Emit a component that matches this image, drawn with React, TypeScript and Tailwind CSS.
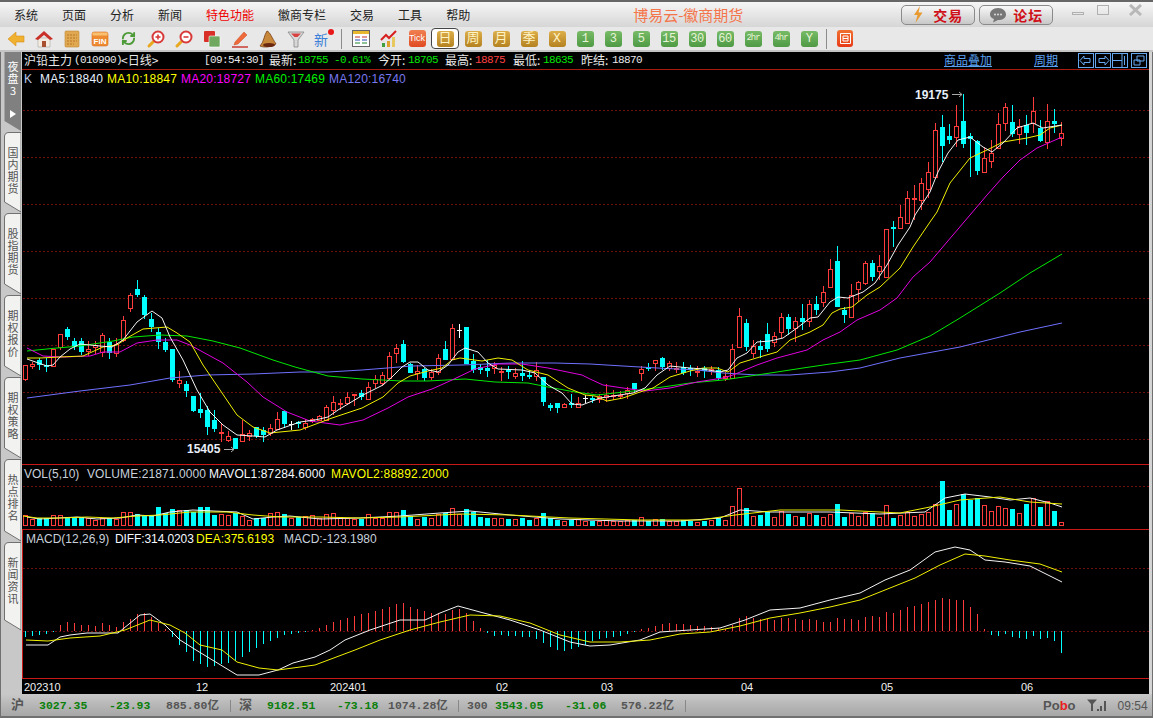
import React from "react";
import { RefreshCw } from "lucide-react";

type Candle = [string, number, number, number, number];

// [colour, high, body top, body bottom, low], in page pixels, one bar every 7px from x=25
const CANDLES: Candle[] = [
  ["r",365,365,379,381],["r",362,364,366,369],["c",358,360,365,370],["c",358,365,367,372],["r",349,349,366,366],
  ["r",334,334,347,350],["c",327,329,337,340],["c",338,341,347,350],["c",338,341,352,355],["r",341,349,351,356],
  ["r",341,345,347,354],["r",333,335,352,357],["c",338,342,353,359],["r",338,344,353,357],["r",316,320,340,342],
  ["r",293,295,308,312],["c",280,289,295,297],["c",295,297,315,319],["c",313,319,327,332],["c",328,332,342,349],
  ["c",338,342,350,352],["c",349,349,380,382],["r",371,380,383,388],["c",381,384,391,397],["c",396,396,411,412],
  ["c",393,409,413,418],["c",406,410,427,435],["c",410,420,429,432],["r",423,432,433,442],["r",431,436,440,442],
  ["c",438,438,449,449],["r",420,434,441,442],["r",430,433,436,441],["c",427,427,436,438],["c",427,430,435,442],
  ["r",424,428,433,436],["r",412,419,429,430],["c",411,411,424,428],["w",421,424,424,430],["c",421,422,424,428],
  ["r",419,423,427,430],["r",418,419,421,423],["r",415,416,420,420],["r",405,407,420,420],["r",396,402,410,415],
  ["r",399,403,404,410],["r",392,397,403,405],["r",394,394,395,406],["c",390,393,397,400],["r",382,387,399,400],
  ["r",375,379,383,388],["r",372,375,383,386],["r",352,356,378,379],["r",344,348,353,363],["c",340,344,362,363],
  ["c",363,364,373,373],["r",365,371,373,380],["c",368,369,378,381],["r",369,372,377,380],["r",354,358,372,375],
  ["c",341,349,360,360],["r",324,328,359,359],["w",324,330,330,338],["c",327,327,364,364],["c",354,361,370,373],
  ["c",364,367,370,374],["c",360,368,371,377],["r",362,365,368,374],["r",367,371,372,381],["c",366,370,371,379],
  ["r",368,373,376,379],["c",361,373,376,381],["c",370,375,376,379],["r",362,370,376,381],["c",377,377,402,406],
  ["c",403,405,408,411],["c",403,403,408,413],["r",403,404,407,408],["c",394,403,405,408],["r",397,403,407,408],
  ["w",395,398,398,403],["c",396,398,400,403],["r",394,396,399,403],["r",384,395,397,402],["r",390,395,396,400],
  ["r",391,395,396,399],["r",387,390,393,399],["c",383,383,389,392],["r",366,369,373,381],["c",363,367,368,371],
  ["r",360,360,363,371],["c",357,358,367,370],["r",361,363,368,371],["r",362,368,369,373],["c",362,367,373,375],
  ["c",365,368,370,376],["r",366,371,372,377],["c",366,368,371,378],["r",366,369,371,375],["c",367,370,378,380],
  ["r",372,376,378,381],["r",344,349,378,379],["r",308,316,347,347],["c",319,323,347,351],["r",340,346,353,358],
  ["c",340,346,350,358],["c",323,334,349,352],["r",332,336,342,347],["r",313,317,332,338],["c",314,317,329,335],
  ["r",317,321,328,342],["c",304,318,322,330],["r",300,304,321,327],["c",296,304,310,315],["r",286,292,302,307],
  ["r",259,269,287,288],["c",246,261,307,307],["c",307,310,315,323],["r",284,295,317,317],["r",281,282,289,302],
  ["r",261,263,283,285],["c",260,263,277,281],["r",255,266,271,280],["r",229,229,277,278],["c",221,227,229,247],
  ["r",205,217,228,228],["r",191,198,223,224],["r",185,198,199,220],["r",178,183,200,210],["r",162,172,189,198],
  ["r",123,130,177,177],["c",115,127,146,162],["c",124,136,140,144],["r",105,126,137,147],["c",94,121,144,148],
  ["c",133,136,139,177],["c",140,141,171,175],["r",147,158,172,172],["r",140,153,161,168],["r",113,124,148,148],
  ["r",103,107,123,131],["c",105,122,134,137],["r",119,126,134,144],["c",115,125,133,145],["r",97,111,123,133],
  ["c",120,128,141,142],["r",104,121,142,149],["c",109,121,124,133],["r",122,133,138,146],
];

const VOL = [
  11,7,8,8,11,11,9,9,9,8,
  6,8,8,7,14,14,12,10,11,19,
  13,17,16,16,14,19,19,11,12,11,
  13,10,6,8,8,13,14,12,8,9,
  10,11,8,12,13,9,8,7,7,12,
  8,8,14,14,16,10,7,9,8,12,
  13,18,12,17,14,9,8,8,8,7,
  7,8,6,8,13,8,6,5,6,7,
  5,5,5,6,5,5,6,6,9,5,
  7,7,5,5,6,5,4,5,6,8,
  6,20,38,18,10,11,14,9,15,12,
  10,9,13,11,9,12,22,9,13,10,
  14,13,9,21,8,11,14,10,12,14,
  22,45,16,22,32,26,28,21,15,20,
  18,17,13,22,28,19,25,15,4,
];

const MACD = [
  -6,-5,-4,-3,-1,6,9,8,6,6,
  5,8,6,4,9,12,17,18,14,8,
  2,-6,-14,-21,-30,-33,-36,-35,-33,-32,
  -30,-26,-21,-17,-13,-10,-7,-4,-3,-2,
  -1,1,3,6,9,11,13,15,17,18,
  20,22,24,27,28,24,22,20,18,18,
  17,21,22,18,10,3,-2,-5,-4,-5,
  -5,-6,-6,-8,-12,-16,-19,-20,-18,-16,
  -14,-10,-8,-7,-6,-5,-3,-1,2,3,
  5,7,8,7,7,6,5,5,4,3,
  2,6,13,15,13,12,12,11,13,13,
  12,11,12,11,9,9,13,12,12,11,
  14,15,14,19,18,21,24,25,27,29,
  31,33,32,31,31,24,17,2,-4,-5,
  -3,-6,-7,-8,-5,-8,-7,-10,-22,
];

const MA5 = "27,359 47,366 53,365 60,357 70,349 80,344 100,346 112,347 123,340 137,322 152,311 162,318 170,337 183,360 197,390 210,412 223,425 237,435 253,436 265,437 277,430 300,422 315,420 328,417 338,410 363,395 383,385 392,377 402,367 410,362 418,362 428,370 438,372 448,365 458,352 465,348 478,352 488,363 498,369 522,370 535,373 548,385 562,393 572,404 582,405 600,398 613,396 633,393 645,388 657,375 670,366 690,368 703,369 720,372 728,370 737,358 747,353 757,342 770,341 783,338 797,328 810,318 818,317 830,302 838,297 848,298 863,292 875,283 887,265 898,245 910,227 915,215 930,192 938,172 948,153 958,140 970,137 983,147 992,152 1003,143 1017,128 1033,123 1043,128 1062,125";
const MA10 = "27,358 40,358 60,357 83,356 103,347 117,345 127,338 143,329 167,327 177,333 190,342 203,365 220,390 237,415 253,427 270,433 300,430 332,418 362,408 383,397 398,383 410,376 428,371 442,368 452,360 460,358 482,361 498,358 512,360 528,370 548,375 568,388 585,395 595,396 607,401 623,398 640,392 653,388 670,377 690,371 703,368 717,368 728,372 740,363 763,356 777,352 790,340 810,332 823,325 832,313 840,309 852,307 867,295 880,287 900,268 913,247 930,222 937,212 950,183 970,158 987,150 1003,142 1027,138 1040,135 1050,128 1062,125";
const MA20 = "27,348 43,356 63,357 90,356 103,352 120,352 137,343 157,340 177,340 190,345 223,363 247,382 263,397 287,412 310,421 340,425 363,420 388,408 408,397 432,389 452,380 475,369 498,364 522,364 548,368 582,375 590,379 603,385 623,388 645,391 670,388 697,382 723,378 733,375 757,365 777,358 807,350 823,340 840,332 857,320 880,310 897,298 913,277 930,262 970,215 987,195 1003,177 1020,160 1037,148 1062,137";
const MA60 = "27,351 57,348 80,346 113,341 133,337 160,335 187,336 213,341 240,348 273,360 295,367 328,376 362,379 402,381 428,381 465,379 495,382 528,383 548,387 575,392 597,395 633,391 663,387 690,383 723,380 757,375 777,372 803,368 830,364 860,360 897,350 930,336 960,318 1000,293 1030,273 1062,254";
const MA120 = "27,398 80,391 130,385 170,378 207,375 253,374 300,372 328,372 362,370 412,366 462,365 512,363 555,363 590,364 623,366 657,368 697,370 723,373 757,375 790,375 830,372 860,368 900,358 960,347 1020,332 1062,323";
const VOL_W = "27,517 40,519 77,517 97,519 120,518 137,515 153,516 170,512 193,510 213,511 237,512 253,519 273,517 290,516 320,519 360,518 400,516 440,513 470,511 510,515 560,519 620,521 680,521 720,518 740,510 770,512 830,512 880,514 925,512 945,498 965,494 990,497 1010,500 1030,498 1050,503 1062,507";
const VOL_Y = "23,516 37,518 60,518 87,517 113,518 137,516 160,515 190,512 227,512 253,515 280,517 320,517 360,518 400,517 460,514 510,515 570,518 640,520 700,520 735,515 780,510 840,510 900,513 930,507 960,500 1000,497 1030,502 1062,504";
const DIFF = "26,645 48,645 60,637 70,635 87,633 118,633 140,615 150,614 165,625 180,640 196,650 237,675 259,675 278,670 293,663 315,657 330,650 345,640 370,630 400,620 425,620 440,613 458,606 480,612 510,620 540,630 570,642 590,646 610,645 640,640 660,632 690,630 720,628 745,620 770,610 800,608 830,600 860,593 885,580 910,570 935,552 955,547 970,550 985,560 1005,562 1030,566 1062,582";
const DEA = "26,640 48,641 70,638 100,636 125,630 150,620 170,625 185,633 200,645 222,650 237,662 259,668 278,670 315,665 355,650 380,640 410,630 440,622 470,615 500,616 530,623 560,635 590,642 620,642 650,640 680,634 710,632 740,626 770,618 800,613 830,607 860,600 890,588 915,578 940,565 965,554 985,556 1010,560 1040,564 1062,572";

const MENU = ["系统", "页面", "分析", "新闻", "特色功能", "徽商专栏", "交易", "工具", "帮助"];
const GOLD = ["周", "月", "季", "X"];
const GREEN = ["1", "3", "5", "15", "30", "60", "2hr", "4hr", "Y"];
const DATES: [string, number][] = [["202310", 24], ["12", 196], ["202401", 330], ["02", 496], ["03", 601], ["04", 741], ["05", 881], ["06", 1021]];

const cjk = "font-['Noto_Sans_CJK_SC',sans-serif]";
const mono = "font-['Liberation_Mono','Noto_Sans_CJK_SC',monospace]";
const digits = "font-['Liberation_Mono',monospace] text-[11px] tracking-[-0.6px]";

const Slot = ({ children }: { children: React.ReactNode }) => (
  <div className="flex h-full w-7 shrink-0 items-center justify-center">{children}</div>
);

const Tile = ({ label, green }: { label: string; green?: boolean }) => (
  <div
    className={
      "flex h-4 w-[17px] items-center justify-center overflow-hidden rounded-[3px] font-['Liberation_Mono','Noto_Sans_CJK_SC',monospace] leading-none " +
      (label.length > 2 ? "text-[9px] tracking-[-1px] " : green ? "text-[12px] tracking-[-0.5px] " : "text-[13px] ") +
      (green
        ? "bg-gradient-to-b from-[#77bb66] to-[#4f9a45] text-[#e6f4d6]"
        : "bg-gradient-to-b from-[#dcae48] to-[#b58220] text-[#fff3c4]")
    }
  >
    {label}
  </div>
);

const Magnifier = ({ minus }: { minus?: boolean }) => (
  <svg width="20" height="20" viewBox="0 0 20 20">
    <line x1="3" y1="17" x2="8" y2="12" stroke="#e8a820" strokeWidth="3" strokeLinecap="round" />
    <circle cx="12" cy="8" r="5.5" fill="#fff" stroke="#d83a3a" strokeWidth="2" />
    <line x1="9.5" y1="8" x2="14.5" y2="8" stroke="#d83a3a" strokeWidth="1.6" />
    {!minus && <line x1="12" y1="5.5" x2="12" y2="10.5" stroke="#d83a3a" strokeWidth="1.6" />}
  </svg>
);

const ToolIcons = () => (
  <>
    <Slot>
      <svg width="18" height="18" viewBox="0 0 18 18">
        <path d="M1 9 L9 2 V6 H17 V12 H9 V16 Z" fill="#f0b030" stroke="#d89018" strokeWidth="0.6" />
      </svg>
    </Slot>
    <Slot>
      <svg width="20" height="20" viewBox="0 0 20 20">
        <path d="M4 9 H16 V18 H4 Z" fill="#f4ece0" stroke="#999" strokeWidth="0.5" />
        <rect x="8" y="12" width="4" height="6" fill="#a85030" />
        <path d="M1 10 L10 2 L19 10 L16 11 L10 6 L4 11 Z" fill="#c83028" />
      </svg>
    </Slot>
    <Slot>
      <svg width="16" height="18" viewBox="0 0 16 18">
        <rect x="1" y="1" width="14" height="16" rx="1" fill="#e0a850" stroke="#c08830" strokeWidth="0.6" />
        <path d="M3 5 H13 M3 8 H13 M3 11 H13 M3 14 H10" stroke="#b87828" strokeWidth="1" strokeDasharray="2 1" />
      </svg>
    </Slot>
    <Slot>
      <svg width="18" height="18" viewBox="0 0 18 18">
        <rect x="1" y="2" width="16" height="14" rx="2" fill="#ee8a30" stroke="#d86c20" strokeWidth="0.6" />
        <rect x="1.5" y="2.5" width="15" height="3" fill="#f8c070" />
        <text x="9" y="14" textAnchor="middle" fontSize="8" fontWeight="700" fill="#fff" fontFamily="'Liberation Sans',sans-serif">FIN</text>
      </svg>
    </Slot>
    <Slot>
      <RefreshCw size={15} color="#4d9a38" strokeWidth={3} />
    </Slot>
    <Slot>
      <Magnifier />
    </Slot>
    <Slot>
      <Magnifier minus />
    </Slot>
    <Slot>
      <svg width="18" height="18" viewBox="0 0 18 18">
        <rect x="1" y="1" width="11" height="11" rx="1" fill="#d83028" />
        <rect x="6" y="6" width="11" height="11" rx="1" fill="#70a860" stroke="#fff" strokeWidth="0.6" />
      </svg>
    </Slot>
    <Slot>
      <svg width="18" height="18" viewBox="0 0 18 18">
        <path d="M4 12 L13 2 L16 5 L7 14 L3 15 Z" fill="#ee6a3a" stroke="#c84a20" strokeWidth="0.5" />
        <line x1="1" y1="17" x2="17" y2="17" stroke="#c83028" strokeWidth="1.4" />
      </svg>
    </Slot>
    <Slot>
      <svg width="20" height="20" viewBox="0 0 20 20">
        <path d="M9 2 C12 3 14 9 18 15 C14 18 6 19 2 17 C6 13 6 6 9 2 Z" fill="#c8883a" stroke="#7a4018" strokeWidth="0.8" />
        <ellipse cx="11" cy="16" rx="6" ry="2" fill="#6a2810" />
      </svg>
    </Slot>
    <Slot>
      <svg width="18" height="18" viewBox="0 0 18 18">
        <path d="M1 2 H17 L11 10 V17 H7 V10 Z" fill="#d8d8d8" stroke="#888" strokeWidth="0.8" />
        <path d="M4 3.5 H14 L10.5 7 H7.5 Z" fill="#d84040" />
      </svg>
    </Slot>
    <Slot>
      <div className="relative h-5 w-5">
        <span className={cjk + " absolute left-0 top-[3px] text-[14px] leading-none text-[#3a80d8]"}>新</span>
        <span className="absolute right-0 top-0 h-[6px] w-[6px] rounded-full bg-[#e81818]" />
      </div>
    </Slot>
  </>
);

const Tab = ({ h, label, active }: { h: number; label: string; active?: boolean }) => (
  <div className={"relative w-[17px] shrink-0 " + (h === 80 ? "h-[80px]" : h === 81 ? "h-[81px]" : h === 82 ? "h-[82px]" : h === 83 ? "h-[83px]" : "h-[89px]")}>
    <svg className="absolute inset-0" width="17" height={h} viewBox={`0 0 17 ${h}`}>
      {active ? (
        <path d={`M0.5 0 H17 V${h - 1} L0.5 ${h - 11} Z`} fill="#808080" />
      ) : (
        <path d={`M17 ${h - 1} L0.5 ${h - 11} V5 Q0.5 0.5 5 0.5 H17 Z`} fill="#f2f2f0" stroke="#555" strokeWidth="0.8" />
      )}
    </svg>
    <div className={cjk + " relative flex w-[17px] flex-col items-center pl-[1px] text-[11px] leading-[12px] " + (active ? "pt-2 text-white" : "pt-[14px] text-[#555]")}>
      {label.split("").map((c, i) => (
        <span key={i}>{c}</span>
      ))}
    </div>
    {active && (
      <svg className="absolute left-[6px] top-[58px]" width="6" height="8" viewBox="0 0 6 8">
        <path d="M0 0 L6 4 L0 8 Z" fill="#fff" />
      </svg>
    )}
  </div>
);

const Candles = () => (
  <g shapeRendering="crispEdges">
    {CANDLES.map(([c, hi, top, bot, lo], i) => {
      const x = 25 + 7 * i;
      const col = c === "r" ? "#ff3c3c" : c === "c" ? "#00ffff" : "#ffffff";
      return (
        <g key={i}>
          <line x1={x + 0.5} y1={hi} x2={x + 0.5} y2={lo} stroke={col} />
          {c === "r" && <rect x={x - 1.5} y={top + 0.5} width={4} height={Math.max(bot - top, 1)} fill="#000" stroke={col} />}
          {c === "c" && <rect x={x - 2} y={top} width={5} height={Math.max(bot - top, 2)} fill={col} />}
          {c === "w" && <rect x={x - 2} y={top} width={5} height={1} fill={col} />}
        </g>
      );
    })}
  </g>
);

const Line = ({ pts, color }: { pts: string; color: string }) => (
  <polyline points={pts} fill="none" stroke={color} strokeWidth="1" strokeLinejoin="round" />
);

const Grid = ({ ys }: { ys: number[] }) => (
  <g shapeRendering="crispEdges">
    {ys.map((y) => (
      <line key={y} x1="23" x2="1149" y1={y + 0.5} y2={y + 0.5} stroke="#6e0e0e" strokeDasharray="2 2" />
    ))}
  </g>
);

const Legend = ({ items }: { items: [string, string][] }) => (
  <div className="relative flex h-[17px] items-center pl-[2px] font-['Liberation_Sans',sans-serif] text-[12px] leading-none">
    {items.map(([text, cls]) => (
      <span key={text} className={cls + " whitespace-pre"}>
        {text}
      </span>
    ))}
  </div>
);

const Head = ({ children, cls }: { children: React.ReactNode; cls: string }) => (
  <span className={cls + " whitespace-pre"}>{children}</span>
);

const NavBtn = ({ d }: { d: string }) => (
  <svg width="16" height="15" viewBox="0 0 16 15">
    <rect x="0.5" y="0.5" width="15" height="14" fill="none" stroke="#66a8f0" />
    <path d={d} fill="none" stroke="#66a8f0" />
  </svg>
);

const Stat = ({ cls, children }: { cls: string; children: React.ReactNode }) => (
  <span className={mono + " whitespace-pre text-[11.5px] font-bold leading-none " + cls}>{children}</span>
);

export default function App() {
  return (
    <div className="flex h-[718px] w-[1153px] flex-col overflow-hidden border-t-2 border-[#666] bg-[#c8c8c8]">
      {/* title bar */}
      <div className="flex h-[25px] shrink-0 items-center bg-gradient-to-b from-[#f6f6f6] to-[#d6d6d6] pl-[14px]">
        <div className={cjk + " flex gap-6 text-[12px] leading-none text-[#222]"}>
          {MENU.map((m) => (
            <span key={m} className={m === "特色功能" ? "text-[#f00000]" : ""}>
              {m}
            </span>
          ))}
        </div>
        <span className={cjk + " ml-[163px] w-[268px] whitespace-pre text-[15px] leading-none text-[#f4754a]"}>博易云-徽商期货</span>
        <div className="flex h-5 w-[74px] items-center justify-center gap-[10px] rounded-[5px] border border-[#8a8a8a] bg-gradient-to-b from-[#f8f8f8] to-[#c8c8c8]">
          <svg width="10" height="17" viewBox="0 0 10 17">
            <path d="M7 0 L1 9 H4.5 L2.5 17 L9.5 6.5 H5.5 Z" fill="#e89a30" />
          </svg>
          <span className={cjk + " text-[14px] font-bold leading-none tracking-[1px] text-[#d01018]"}>交易</span>
        </div>
        <div className="ml-[4px] flex h-5 w-[74px] items-center justify-center gap-[6px] rounded-[5px] border border-[#8a8a8a] bg-gradient-to-b from-[#f8f8f8] to-[#c8c8c8]">
          <svg width="18" height="16" viewBox="0 0 18 16">
            <path d="M9 1 C14 1 17 4 17 7.5 C17 11 14 13 9 13 L4 15.5 L5 12 C2.5 11 1 9.5 1 7.5 C1 4 4 1 9 1 Z" fill="#777" />
            <circle cx="6" cy="7.5" r="1" fill="#ddd" />
            <circle cx="9" cy="7.5" r="1" fill="#ddd" />
            <circle cx="12" cy="7.5" r="1" fill="#ddd" />
          </svg>
          <span className={cjk + " text-[14px] font-bold leading-none tracking-[1px] text-[#d01018]"}>论坛</span>
        </div>
        <div className="ml-[19px] mt-[10px] h-[3px] w-[12px] self-start border border-[#b0b0b0] bg-[#e8e8e8]" />
        <div className="ml-[13px] mt-[3px] h-[10px] w-[12px] self-start border border-[#b0b0b0]" />
        <svg className="ml-[19px] mt-[2px] self-start" width="15" height="12" viewBox="0 0 15 12">
          <path d="M2 1 L13 11 M13 1 L2 11" stroke="#b8b8b8" strokeWidth="3" />
        </svg>
      </div>

      {/* toolbar */}
      <div className="flex h-[25px] shrink-0 items-center border-b-2 border-[#c4c4c4] bg-[#e8e8e8] pl-[2px]">
        <ToolIcons />
        <div className="ml-[3px] mr-[5px] h-[20px] w-px bg-[#8c8c8c]" />
        <Slot>
          <svg width="18" height="17" viewBox="0 0 18 17">
            <rect x="0.5" y="0.5" width="17" height="16" fill="#fff" stroke="#666" />
            <rect x="1" y="1" width="16" height="3" fill="#e8b830" />
            <path d="M3 7 H8 M10 7 H15" stroke="#c83028" strokeWidth="1.2" />
            <path d="M3 10 H8 M10 10 H15" stroke="#2848b8" strokeWidth="1.2" />
            <path d="M3 13 H8 M10 13 H15" stroke="#208830" strokeWidth="1.2" />
          </svg>
        </Slot>
        <Slot>
          <svg width="18" height="18" viewBox="0 0 18 18">
            <path d="M1 10 L6 5 L9 8 L16 1" fill="none" stroke="#d82020" strokeWidth="2" />
            <rect x="2" y="13" width="3" height="4" fill="#40a040" />
            <rect x="7" y="11" width="3" height="6" fill="#e0a030" />
            <rect x="12" y="7" width="3" height="10" fill="#e8c860" />
          </svg>
        </Slot>
        <Slot>
          <div className="flex h-[17px] w-[17px] items-center justify-center rounded-[3px] bg-gradient-to-b from-[#f08050] to-[#e04820] font-['Liberation_Sans',sans-serif] text-[9px] leading-none text-white">
            Tick
          </div>
        </Slot>
        <div className="flex h-[21px] w-7 shrink-0 items-center justify-center rounded-[4px] border border-[#444] bg-white">
          <Tile label="日" />
        </div>
        {GOLD.map((g) => (
          <Slot key={g}>
            <Tile label={g} />
          </Slot>
        ))}
        {GREEN.map((g) => (
          <Slot key={g}>
            <Tile label={g} green />
          </Slot>
        ))}
        <div className="ml-[3px] mr-[4px] h-[20px] w-px bg-[#8c8c8c]" />
        <Slot>
          <div className="flex h-[17px] w-[16px] items-center justify-center rounded-[3px] bg-gradient-to-b from-[#f07030] to-[#e83818]">
            <svg width="11" height="11" viewBox="0 0 11 11">
              <path d="M0.5 0.5 H10.5 V10.5 H0.5 Z M3 3 H8 V8 H3 Z M3 5.5 H8" fill="none" stroke="#fff" />
            </svg>
          </div>
        </Slot>
      </div>

      {/* body */}
      <div className="flex h-[642px] shrink-0">
        <div className="flex w-[22px] shrink-0 flex-col border-l border-[#707070] pl-[3px]">
          <Tab h={80} label="夜盘3" active />
          <Tab h={81} label="国内期货" />
          <Tab h={82} label="股指期货" />
          <Tab h={82} label="期权报价" />
          <Tab h={82} label="期权策略" />
          <Tab h={83} label="热点排名" />
          <Tab h={89} label="新闻资讯" />
        </div>

        <div className="flex w-[1127px] shrink-0 flex-col bg-black">
          {/* quote header */}
          <div className="flex h-[18px] shrink-0 items-center border-b border-[#a81c10] pb-[1px] pl-[2px] text-[12px] leading-none text-[#e8e8e8]">
            <Head cls={cjk + " w-[50px]"}>沪铅主力</Head>
            <Head cls={digits + " w-[47px]"}>(010990)</Head>
            <Head cls={cjk + " w-[83px]"}>{"<日线>"}</Head>
            <Head cls={digits + " w-[65px]"}>[09:54:30]</Head>
            <Head cls={cjk + " w-[29px]"}>最新:</Head>
            <Head cls={digits + " w-[36px] text-[#00e800]"}>18755</Head>
            <Head cls={digits + " w-[44px] text-[#00e800]"}>-0.61%</Head>
            <Head cls={cjk + " w-[30px]"}>今开:</Head>
            <Head cls={digits + " w-[37px] text-[#00e800]"}>18705</Head>
            <Head cls={cjk + " w-[30px]"}>最高:</Head>
            <Head cls={digits + " w-[38px] text-[#ff4040]"}>18875</Head>
            <Head cls={cjk + " w-[30px]"}>最低:</Head>
            <Head cls={digits + " w-[38px] text-[#00e800]"}>18635</Head>
            <Head cls={cjk + " w-[31px]"}>昨结:</Head>
            <Head cls={digits + " w-[332px]"}>18870</Head>
            <Head cls={cjk + " w-[90px] text-[#5aa0f0] underline"}>商品叠加</Head>
            <Head cls={cjk + " w-[44px] text-[#5aa0f0] underline"}>周期</Head>
            <div className="flex gap-px">
              <NavBtn d="M12 5.5 H6 V3 L2 7.5 L6 12 V9.5 H12 Z" />
              <NavBtn d="M4 5.5 H10 V3 L14 7.5 L10 12 V9.5 H4 Z" />
              <NavBtn d="M1 7.5 H10 M10 1 V14 M12.5 3 V12" />
            </div>
            <div className="ml-[3px]">
              <NavBtn d="M6 3 H13 V8 H6 Z M3 7 H9 V12 H3 Z" />
            </div>
          </div>

          {/* main chart */}
          <div className="relative h-[395px] shrink-0 border-b border-[#c81818]">
            <svg className="absolute inset-0" width="1127" height="394" viewBox="22 70 1127 394">
              <Grid ys={[110, 157, 204, 251, 298, 345, 392, 439]} />
              <Candles />
              <Line pts={MA120} color="#7070ff" />
              <Line pts={MA60} color="#00e800" />
              <Line pts={MA20} color="#e000e0" />
              <Line pts={MA10} color="#f0f000" />
              <Line pts={MA5} color="#f4f4f4" />
              <g fontFamily="'Liberation Sans',sans-serif" fontSize="12" fontWeight="700" fill="#e8eef8">
                <text x="915" y="99">19175</text>
                <text x="187" y="453">15405</text>
              </g>
              <path d="M952 94.5 H962 M959 92 L962 94.5 L959 97" fill="none" stroke="#aaa" />
              <path d="M224 449.5 H234 M231 447 L234 449.5 L231 452" fill="none" stroke="#aaa" />
            </svg>
            <Legend
              items={[
                ["K", "w-[16px] text-[#b8c8e8]"],
                ["MA5:18840", "w-[67px] tracking-[0.2px] text-[#e8f0ff]"],
                ["MA10:18847", "w-[74px] tracking-[0.2px] text-[#ffff00]"],
                ["MA20:18727", "w-[74px] tracking-[0.2px] text-[#ff00ff]"],
                ["MA60:17469", "w-[74px] tracking-[0.2px] text-[#00f000]"],
                ["MA120:16740", "w-[90px] tracking-[0.2px] text-[#7878f0]"],
              ]}
            />
          </div>

          {/* volume */}
          <div className="relative h-[65px] shrink-0 border-b border-[#c81818]">
            <svg className="absolute inset-0" width="1127" height="64" viewBox="22 465 1127 64">
              <Grid ys={[486]} />
              <g shapeRendering="crispEdges">
                {VOL.map((v, i) => {
                  const x = 25 + 7 * i;
                  return CANDLES[i][0] === "c" ? (
                    <rect key={i} x={x - 2} y={526 - v} width={5} height={v} fill="#00ffff" />
                  ) : (
                    <rect key={i} x={x - 1.5} y={526.5 - v} width={4} height={v - 1} fill="none" stroke="#ff3c3c" />
                  );
                })}
              </g>
              <Line pts={VOL_W} color="#f4f4f4" />
              <Line pts={VOL_Y} color="#f0f000" />
            </svg>
            <Legend
              items={[
                ["VOL(5,10)", "w-[63px] text-[#c8d0dc]"],
                ["VOLUME:21871.0000", "w-[122px] tracking-[0.1px] text-[#c8d0dc]"],
                ["MAVOL1:87284.6000", "w-[122px] tracking-[0.1px] text-[#f4f8ff]"],
                ["MAVOL2:88892.2000", "tracking-[0.2px] text-[#ffff00]"],
              ]}
            />
          </div>

          {/* macd */}
          <div className="relative h-[149px] shrink-0 border-b border-l border-[#c81818]">
            <svg className="absolute -left-px top-0" width="1127" height="148" viewBox="22 530 1127 148">
              <Grid ys={[568, 631]} />
              <g shapeRendering="crispEdges">
                {MACD.map((v, i) => {
                  const x = 25.5 + 7 * i;
                  return v >= 0 ? (
                    <line key={i} x1={x} x2={x} y1={631 - v} y2={631} stroke="#ff3c3c" />
                  ) : (
                    <line key={i} x1={x} x2={x} y1={631} y2={631 - v} stroke="#00ffff" />
                  );
                })}
              </g>
              <Line pts={DIFF} color="#f4f4f4" />
              <Line pts={DEA} color="#f0f000" />
            </svg>
            <Legend
              items={[
                ["MACD(12,26,9)", "w-[90px] pl-px text-[#c8d0dc]"],
                ["DIFF:314.0203", "w-[81px] tracking-[-0.1px] text-[#f4f8ff]"],
                ["DEA:375.6193", "w-[88px] text-[#ffff00]"],
                ["MACD:-123.1980", "text-[#c8d0dc]"],
              ]}
            />
          </div>

          {/* date axis */}
          <svg className="shrink-0" width="1127" height="15" viewBox="22 679 1127 15">
            {DATES.map(([d, x]) => (
              <text key={d} x={x} y="691" fill="#f0f0f0" fontSize="11" fontFamily="'Liberation Sans',sans-serif">
                {d}
              </text>
            ))}
          </svg>
        </div>

        <div className="w-[4px] shrink-0 border-r border-[#707070] bg-[#d4d4d4]" />
      </div>

      {/* status bar */}
      <div className="flex h-[24px] shrink-0 items-center border-b-2 border-l border-r border-[#707070] bg-gradient-to-b from-[#c8c8c8] to-[#a6a6a6] pl-[10px] pt-[1px]">
        <Stat cls="w-[28px] text-[#555] !text-[13px]">沪</Stat>
        <Stat cls="w-[70px] text-[#0a800a]">3027.35</Stat>
        <Stat cls="w-[57px] text-[#0a800a]">-23.93</Stat>
        <Stat cls="w-[64px] text-[#555]">885.80亿</Stat>
        <div className="mr-[8px] h-[12px] w-px bg-[#888]" />
        <Stat cls="w-[28px] text-[#555] !text-[13px]">深</Stat>
        <Stat cls="w-[70px] text-[#0a800a]">9182.51</Stat>
        <Stat cls="w-[51px] text-[#0a800a]">-73.18</Stat>
        <Stat cls="w-[70px] text-[#555]">1074.28亿</Stat>
        <div className="mr-[8px] h-[12px] w-px bg-[#888]" />
        <Stat cls="w-[28px] text-[#555]">300</Stat>
        <Stat cls="w-[70px] text-[#0a800a]">3543.05</Stat>
        <Stat cls="w-[56px] text-[#0a800a]">-31.06</Stat>
        <Stat cls="w-[64px] text-[#555]">576.22亿</Stat>
        <div className="h-[12px] w-px bg-[#888]" />
        <span className="ml-[357px] font-['Liberation_Sans',sans-serif] text-[13px] font-bold leading-none text-[#555]">
          Po<span className="text-[#e82020]">b</span>o
        </span>
        <svg className="ml-[11px]" width="21" height="13" viewBox="0 0 21 13">
          <path d="M0 0.5 H10 L6 5 V12 H4 V5 Z" fill="#555" />
          <rect x="10" y="10" width="2" height="2" fill="#555" />
          <rect x="13" y="7" width="2" height="5" fill="#555" />
          <rect x="17" y="2" width="2" height="10" fill="#555" />
        </svg>
        <span className="ml-[10px] font-['Liberation_Sans',sans-serif] text-[12px] leading-none text-[#555]">09:54</span>
      </div>
    </div>
  );
}
